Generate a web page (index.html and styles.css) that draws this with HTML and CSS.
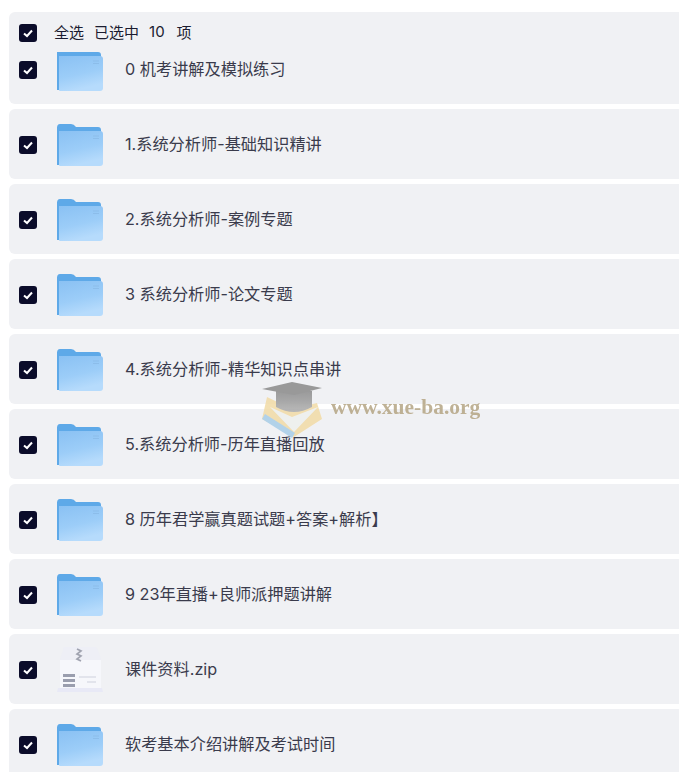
FILE: index.html
```html
<!DOCTYPE html>
<html>
<head>
    <meta charset="UTF-8">
    <title>文件列表</title>
    <link rel="stylesheet" href="styles.css">
</head>
<body>

    <svg class="defs" width="0" height="0">
        <defs>
            <linearGradient id="folderFront" x1="0" y1="0" x2="0.3" y2="1">
                <stop offset="0" stop-color="#8ac1f3"/>
                <stop offset="0.6" stop-color="#9ccdf8"/>
                <stop offset="1" stop-color="#b6dbfc"/>
            </linearGradient>
            <linearGradient id="capFill" x1="0" y1="0" x2="0" y2="1">
                <stop offset="0" stop-color="#8b8b8b"/>
                <stop offset="1" stop-color="#adadad"/>
            </linearGradient>
            <symbol id="folder" viewBox="0 0 46 42">
                <path d="M0 4 Q0 0 3 0 H14 Q17 0 19 3 H41 Q44 3 44 6 V12 H0 Z" fill="#5ea9e8"/>
                <path d="M0 3 H2 V41 H0 Z" fill="#5ea9e8"/>
                <path d="M2 7 H43 Q46 7 46 10 V39 Q46 42 43 42 H3 Q2 42 2 41 Z" fill="url(#folderFront)"/>
                <path d="M36 12 H42 M36 14.5 H42" stroke="#8cbdea" stroke-width="1"/>
            </symbol>
        </defs>
    </svg>

    <div class="list">
        <div class="select-bar">
            <span class="check"><svg viewBox="0 0 18 18"><path d="M5 9.4 L8 12 L13 6.5" fill="none" stroke="#fff" stroke-width="2"/></svg></span>
            <span class="select-text">全选</span>
            <span class="select-text">已选中</span>
            <span class="select-text count">10</span>
            <span class="select-text">项</span>
        </div>

        <div class="row">
            <span class="check"><svg viewBox="0 0 18 18"><path d="M5 9.4 L8 12 L13 6.5" fill="none" stroke="#fff" stroke-width="2"/></svg></span>
            <svg class="icon"><use href="#folder"/></svg>
            <span class="name">0 机考讲解及模拟练习</span>
        </div>
        <div class="row">
            <span class="check"><svg viewBox="0 0 18 18"><path d="M5 9.4 L8 12 L13 6.5" fill="none" stroke="#fff" stroke-width="2"/></svg></span>
            <svg class="icon"><use href="#folder"/></svg>
            <span class="name">1.系统分析师-基础知识精讲</span>
        </div>
        <div class="row">
            <span class="check"><svg viewBox="0 0 18 18"><path d="M5 9.4 L8 12 L13 6.5" fill="none" stroke="#fff" stroke-width="2"/></svg></span>
            <svg class="icon"><use href="#folder"/></svg>
            <span class="name">2.系统分析师-案例专题</span>
        </div>
        <div class="row">
            <span class="check"><svg viewBox="0 0 18 18"><path d="M5 9.4 L8 12 L13 6.5" fill="none" stroke="#fff" stroke-width="2"/></svg></span>
            <svg class="icon"><use href="#folder"/></svg>
            <span class="name">3 系统分析师-论文专题</span>
        </div>
        <div class="row">
            <span class="check"><svg viewBox="0 0 18 18"><path d="M5 9.4 L8 12 L13 6.5" fill="none" stroke="#fff" stroke-width="2"/></svg></span>
            <svg class="icon"><use href="#folder"/></svg>
            <span class="name">4.系统分析师-精华知识点串讲</span>
        </div>
        <div class="row">
            <span class="check"><svg viewBox="0 0 18 18"><path d="M5 9.4 L8 12 L13 6.5" fill="none" stroke="#fff" stroke-width="2"/></svg></span>
            <svg class="icon"><use href="#folder"/></svg>
            <span class="name">5.系统分析师-历年直播回放</span>
        </div>
        <div class="row">
            <span class="check"><svg viewBox="0 0 18 18"><path d="M5 9.4 L8 12 L13 6.5" fill="none" stroke="#fff" stroke-width="2"/></svg></span>
            <svg class="icon"><use href="#folder"/></svg>
            <span class="name">8 历年君学赢真题试题+答案+解析】</span>
        </div>
        <div class="row">
            <span class="check"><svg viewBox="0 0 18 18"><path d="M5 9.4 L8 12 L13 6.5" fill="none" stroke="#fff" stroke-width="2"/></svg></span>
            <svg class="icon"><use href="#folder"/></svg>
            <span class="name">9 23年直播+良师派押题讲解</span>
        </div>
        <div class="row">
            <span class="check"><svg viewBox="0 0 18 18"><path d="M5 9.4 L8 12 L13 6.5" fill="none" stroke="#fff" stroke-width="2"/></svg></span>
            <svg class="icon icon-zip" viewBox="0 0 46 47">
                <path d="M7 1 H38 Q40 1 41 4 L44 13 V42 H3 V13 L6 4 Q6 1 7 1 Z" fill="#eeeff6"/>
                <path d="M3 14 H44 V42 H3 Z" fill="#f6f7fb"/>
                <path d="M1 42 H45 L46 46 H0 Z" fill="#e8e9f6"/>
                <path d="M20 3 L24 5 L20 8 L24 10 L20 13 L24 15" fill="none" stroke="#a0a3b0" stroke-width="1.7"/>
                <path d="M6 28 H18 V31 H6 Z M6 33 H18 V36 H6 Z M6 38 H18 V41 H6 Z" fill="#9a9eae"/>
                <path d="M22 31 H39 M30 36 H39" stroke="#dcdee7" stroke-width="1.6"/>
            </svg>
            <span class="name">课件资料.zip</span>
        </div>
        <div class="row">
            <span class="check"><svg viewBox="0 0 18 18"><path d="M5 9.4 L8 12 L13 6.5" fill="none" stroke="#fff" stroke-width="2"/></svg></span>
            <svg class="icon"><use href="#folder"/></svg>
            <span class="name">软考基本介绍讲解及考试时间</span>
        </div>
    </div>

    <!-- site watermark over the list -->
    <div class="watermark">
        <svg class="wm-logo" viewBox="0 0 61 57">
            <path d="M0 38 L5 16 L30 28 L55 22 L60 38 L32 56 Z" fill="#f2dba6"/>
            <path d="M0 38 L30 57 L33 52 L3 33 Z" fill="#a8cde8"/>
            <path d="M8 26 L30 36 L56 26 L32 51 Z" fill="#eef0ee"/>
            <path d="M14 10 H50 V26 Q32 36 14 26 Z" fill="url(#capFill)"/>
            <path d="M0 8 L30 1 L60 7 L32 14 Z" fill="#8a8a8a"/>
        </svg>
        <span class="wm-text">www.xue-ba.org</span>
    </div>

</body>
</html>
```

FILE: styles.css
```css
body {
    margin: 0;
    font-family: "Inter", "Noto Sans CJK SC", sans-serif;
    color: #3a3b4c;
    overflow: hidden;
}

.defs {
    position: absolute;
}

.list {
    display: flex;
    flex-direction: column;
    gap: 5px;
    padding: 12px 0 0 9px;
}

.select-bar {
    display: flex;
    align-items: center;
    gap: 10px;
    height: 40px;
    margin-bottom: -23px;
    padding-left: 10px;
    box-sizing: border-box;
    background-color: #f0f1f4;
    border-radius: 6px 0 0 0;
    color: #1b1c30;
    font-size: 15px;
    position: relative;
    z-index: 1;
}

.select-bar .check {
    margin-right: 7px;
    margin-top: 2px;
}

.select-text {
    margin-bottom: 1px;
}

.count {
    margin-right: 2px;
}

.row {
    display: flex;
    align-items: center;
    height: 70px;
    flex-shrink: 0;
    padding-left: 10px;
    box-sizing: border-box;
    background-color: #f0f1f4;
    border-radius: 6px 0 0 6px;
}

.check {
    width: 18px;
    height: 18px;
    border-radius: 3px;
    background-color: #0b0c2a;
    flex-shrink: 0;
    margin-top: 2px;
}

.check svg {
    display: block;
    width: 18px;
    height: 18px;
}

.icon {
    width: 46px;
    height: 42px;
    margin-left: 20px;
    margin-top: 2px;
    flex-shrink: 0;
}

.icon-zip {
    height: 47px;
    margin-top: 0;
}

.name {
    margin-left: 22px;
    margin-bottom: 2px;
    font-size: 16.2px;
    white-space: nowrap;
}

.watermark {
    position: absolute;
    left: 262px;
    top: 381px;
    display: flex;
    align-items: center;
    gap: 8px;
    opacity: 0.85;
    filter: blur(0.4px);
    z-index: 2;
}

.wm-logo {
    width: 61px;
    height: 57px;
}

.wm-text {
    font-family: "Liberation Serif", serif;
    font-weight: bold;
    font-size: 21.5px;
    color: #b5a584;
    margin-bottom: 4px;
}
```
